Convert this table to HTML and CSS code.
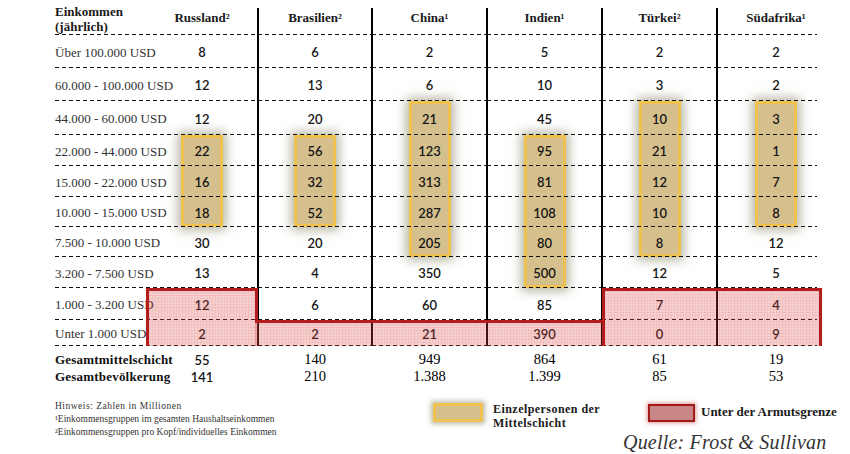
FILE: index.html
```html
<!DOCTYPE html>
<html lang="de">
<head>
<meta charset="utf-8">
<title>Einkommensgruppen</title>
<link rel="stylesheet" href="styles.css">
</head>
<body>
<div class="page">
  <div class="tbl">
    <div class="row head">
      <div class="lab hd">Einkommen<br>(jährlich)</div>
      <div class="ch">Russland²</div>
      <div class="ch">Brasilien²</div>
      <div class="ch">China¹</div>
      <div class="ch">Indien¹</div>
      <div class="ch">Türkei²</div>
      <div class="ch">Südafrika¹</div>
    </div>
    <div class="row"><div class="lab">Über 100.000 USD</div><div class="n">8</div><div class="n">6</div><div class="n">2</div><div class="n">5</div><div class="n">2</div><div class="n">2</div></div>
    <div class="row"><div class="lab">60.000 - 100.000 USD</div><div class="n">12</div><div class="n">13</div><div class="n">6</div><div class="n">10</div><div class="n">3</div><div class="n">2</div></div>
    <div class="row"><div class="lab">44.000 - 60.000 USD</div><div class="n">12</div><div class="n">20</div><div class="n">21</div><div class="n">45</div><div class="n">10</div><div class="n">3</div></div>
    <div class="row"><div class="lab">22.000 - 44.000 USD</div><div class="n">22</div><div class="n">56</div><div class="n">123</div><div class="n">95</div><div class="n">21</div><div class="n">1</div></div>
    <div class="row"><div class="lab">15.000 - 22.000 USD</div><div class="n">16</div><div class="n">32</div><div class="n">313</div><div class="n">81</div><div class="n">12</div><div class="n">7</div></div>
    <div class="row"><div class="lab">10.000 - 15.000 USD</div><div class="n">18</div><div class="n">52</div><div class="n">287</div><div class="n">108</div><div class="n">10</div><div class="n">8</div></div>
    <div class="row"><div class="lab">7.500 - 10.000 USD</div><div class="n">30</div><div class="n">20</div><div class="n">205</div><div class="n">80</div><div class="n">8</div><div class="n">12</div></div>
    <div class="row"><div class="lab">3.200 - 7.500 USD</div><div class="n">13</div><div class="n">4</div><div class="n">350</div><div class="n">500</div><div class="n">12</div><div class="n">5</div></div>
    <div class="row"><div class="lab">1.000 - 3.200 USD</div><div class="n">12</div><div class="n">6</div><div class="n">60</div><div class="n">85</div><div class="n">7</div><div class="n">4</div></div>
    <div class="row"><div class="lab">Unter 1.000 USD</div><div class="n">2</div><div class="n">2</div><div class="n">21</div><div class="n">390</div><div class="n">0</div><div class="n">9</div></div>
    <div class="row tot t1"><div class="lab b">Gesamtmittelschicht</div><div class="n">55</div><div class="n s">140</div><div class="n s">949</div><div class="n s">864</div><div class="n s">61</div><div class="n s">19</div></div>
    <div class="row tot t2"><div class="lab b">Gesamtbevölkerung</div><div class="n">141</div><div class="n s">210</div><div class="n s">1.388</div><div class="n s">1.399</div><div class="n s">85</div><div class="n s">53</div></div>

    <div class="hl hl-ru"></div>
    <div class="hl hl-br"></div>
    <div class="hl hl-cn"></div>
    <div class="hl hl-in"></div>
    <div class="hl hl-tr"></div>
    <div class="hl hl-za"></div>

    <div class="vl vl3"></div>
    <div class="vl vl4"></div>
    <div class="vl vl5"></div>
    <div class="vl vl6"></div>
    <div class="vl vl7"></div>

    <div class="pv pv-a"></div>
    <div class="pv pv-b"></div>
    <div class="pv pv-c"></div>
    <div class="pv pv-d"></div>
  </div>

  <div class="foot">
    <div class="notes">
      <div class="note1">Hinweis: Zahlen in Millionen</div>
      <div>¹Einkommensgruppen im gesamten Haushaltseinkommen</div>
      <div>²Einkommensgruppen pro Kopf/individuelles Einkommen</div>
    </div>
    <div class="legend">
      <div class="leg-row">
        <div class="li li1">
          <div class="sw sw-gold"></div>
          <div class="lt lt1">Einzelpersonen der<br>Mittelschicht</div>
        </div>
        <div class="li li2">
          <div class="sw sw-red"></div>
          <div class="lt lt2">Unter der Armutsgrenze</div>
        </div>
      </div>
      <div class="src">Quelle: Frost &amp; Sullivan</div>
    </div>
  </div>
</div>
</body>
</html>
```

FILE: styles.css
```css
html, body {
  margin: 0;
  padding: 0;
  background: #ffffff;
}

.page {
  width: 850px;
  height: 454px;
  overflow: hidden;
  padding: 8px 0 0 55px;
  box-sizing: border-box;
  font-family: "Liberation Serif", "Times New Roman", serif;
  color: #222;
}

.tbl {
  display: grid;
  grid-template-columns: 91px 112px 114px 115px 115px 115px 118px;
  grid-template-rows: 27px 33px 33px 34px 31px 31px 30px 30px 31px 32px 26px 22px 17px;
}

.row { display: contents; }

.tbl > .row:nth-child(1) > * { grid-row: 1; }
.tbl > .row:nth-child(2) > * { grid-row: 2; }
.tbl > .row:nth-child(3) > * { grid-row: 3; }
.tbl > .row:nth-child(4) > * { grid-row: 4; }
.tbl > .row:nth-child(5) > * { grid-row: 5; }
.tbl > .row:nth-child(6) > * { grid-row: 6; }
.tbl > .row:nth-child(7) > * { grid-row: 7; }
.tbl > .row:nth-child(8) > * { grid-row: 8; }
.tbl > .row:nth-child(9) > * { grid-row: 9; }
.tbl > .row:nth-child(10) > * { grid-row: 10; }
.tbl > .row:nth-child(11) > * { grid-row: 11; }
.tbl > .row:nth-child(12) > * { grid-row: 12; }
.tbl > .row:nth-child(13) > * { grid-row: 13; }

.row > :nth-child(1) { grid-column: 1; }
.row > :nth-child(2) { grid-column: 2; }
.row > :nth-child(3) { grid-column: 3; }
.row > :nth-child(4) { grid-column: 4; }
.row > :nth-child(5) { grid-column: 5; }
.row > :nth-child(6) { grid-column: 6; }
.row > :nth-child(7) { grid-column: 7; }

.row > * {
  z-index: 2;
  display: flex;
  align-items: center;
  white-space: nowrap;
  background-image: repeating-linear-gradient(90deg, #111 0 4px, transparent 4px 7px);
  background-size: 100% 1px;
  background-position: left bottom;
  background-repeat: no-repeat;
}

.row > :nth-child(7) {
  background-size: calc(100% - 18px) 1px;
}

.row.tot > * {
  background-image: none;
}

.lab {
  font-size: 13px;
  color: #333;
  padding-top: 2px;
  box-sizing: border-box;
}

.n {
  justify-content: center;
  font-family: "Lato", "Liberation Sans", sans-serif;
  font-size: 13px;
  font-weight: 600;
  color: #161616;
  padding-top: 1px;
  box-sizing: border-box;
}

.head > * {
  align-items: flex-start;
  line-height: 14.5px;
  font-weight: bold;
  font-size: 13px;
  color: #1a1a1a;
}

.head .ch {
  justify-content: center;
  padding-top: 3px;
  box-sizing: border-box;
}

.head .hd {
  padding-top: 0;
  margin-top: -3px;
}

.t1 > * {
  padding-top: 5px;
  box-sizing: border-box;
}

.t2 > * {
  padding-top: 0;
}

.tot .lab.b {
  font-weight: bold;
  color: #111;
  letter-spacing: 0.2px;
  font-size: 13px;
}

.tot .n.s {
  font-family: "Liberation Serif", "Times New Roman", serif;
  font-weight: normal;
  font-size: 14.5px;
  color: #000;
}

/* Mittelschicht highlight boxes */
.hl {
  z-index: 1;
  justify-self: center;
  width: 42px;
  box-sizing: border-box;
  background: #d5c08d;
  border: 3px solid #efc24f;
  box-shadow: 0 0 10px 3px rgba(105, 105, 65, 0.5);
}

.hl-ru { grid-column: 2; grid-row: 5 / 8; }
.hl-br { grid-column: 3; grid-row: 5 / 8; }
.hl-cn { grid-column: 4; grid-row: 4 / 9; }
.hl-in { grid-column: 5; grid-row: 5 / 10; }
.hl-tr { grid-column: 6; grid-row: 4 / 9; }
.hl-za { grid-column: 7; grid-row: 4 / 8; }

/* vertical separators */
.vl {
  z-index: 2;
  justify-self: start;
  width: 2px;
  margin-left: -1px;
  background: #000;
  grid-row: 1 / 12;
}
.vl3 { grid-column: 3; }
.vl4 { grid-column: 4; }
.vl5 { grid-column: 5; }
.vl6 { grid-column: 6; }
.vl7 { grid-column: 7; }

/* poverty area */
.pv {
  z-index: 3;
  box-sizing: border-box;
  border: 0 solid #b31d1d;
  background-color: rgba(222, 70, 70, 0.26);
  background-image:
    repeating-linear-gradient(90deg, rgba(190, 40, 40, 0.07) 0 1px, transparent 1px 3px),
    repeating-linear-gradient(0deg, rgba(190, 40, 40, 0.07) 0 1px, transparent 1px 3px);
}

.pv-a {
  grid-column: 2;
  grid-row: 10;
  border-top-width: 3px;
  border-left-width: 3px;
  border-right-width: 3px;
}

.pv-b {
  grid-column: 2;
  grid-row: 11;
  border-left-width: 3px;
}

.pv-c {
  grid-column: 3 / 6;
  grid-row: 11;
  border-top-width: 3px;
  margin-left: -3px;
  background-clip: padding-box;
}

.pv-d {
  grid-column: 6 / 8;
  grid-row: 10 / 12;
  border-top-width: 3px;
  border-left-width: 3px;
  border-right-width: 3px;
  margin-right: 13px;
}

/* footer */
.foot {
  display: grid;
  grid-template-columns: 378px 1fr;
  margin-top: 15px;
}

.notes {
  font-size: 9.5px;
  line-height: 13px;
  color: #333;
}

.note1 {
  letter-spacing: 0.5px;
}

.legend {
  display: flex;
  flex-direction: column;
  padding-top: 3px;
}

.leg-row {
  display: flex;
  align-items: flex-start;
}

.li {
  display: flex;
  align-items: flex-start;
  gap: 10px;
}

.li1 { width: 215px; }
.li2 { gap: 6px; }

.sw { box-sizing: border-box; }

.sw-gold {
  width: 50px;
  height: 19px;
  background: #d5c08d;
  border: 3px solid #efc24f;
  box-shadow: 0 0 5px 2px rgba(105, 105, 65, 0.45);
}

.sw-red {
  width: 47px;
  height: 18px;
  margin-top: 1px;
  background: #c98686;
  border: 2px solid #a11a1a;
  box-shadow: 0 0 4px 1px rgba(190, 50, 50, 0.5);
}

.lt {
  font-weight: bold;
  font-size: 13px;
  color: #1a1a1a;
}

.lt1 {
  font-size: 12px;
  line-height: 13.5px;
  letter-spacing: 0.45px;
  margin-top: 0;
}

.lt2 {
  line-height: 14.5px;
  margin-top: 2px;
}

.src {
  margin-top: 3px;
  padding-left: 190px;
  font-style: italic;
  font-size: 20px;
  letter-spacing: 0.2px;
  line-height: 18px;
  color: #333;
  white-space: nowrap;
}
```
